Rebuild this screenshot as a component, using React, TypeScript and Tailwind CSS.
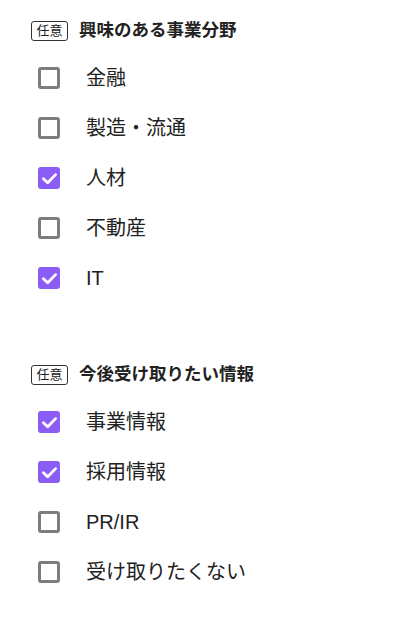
import React from "react";

const Check = ({ checked }: { checked: boolean }) =>
  checked ? (
    <span className="flex h-[22px] w-[22px] items-center justify-center rounded-[3px] bg-[#8b5cf6]">
      <svg width="17" height="17" viewBox="0 0 14 14" fill="none">
        <path d="M2 7.2 L5.5 10.5 L12 3.8" stroke="white" strokeWidth="2.3" strokeLinecap="round" strokeLinejoin="round" />
      </svg>
    </span>
  ) : (
    <span className="block h-[22px] w-[22px] rounded-[3px] border-[3px] border-[#7d7d7d] bg-white" />
  );

const Section = ({ title, items }: { title: string; items: [string, boolean][] }) => (
  <div className="flex flex-col">
    <div className="flex h-[21px] items-center gap-[11px]">
      <span className="flex h-[20px] w-[37px] items-center justify-center rounded-[3px] border border-[#333] text-[13px] leading-none text-[#222]">
        任意
      </span>
      <span className="text-[17.5px] font-bold text-[#222]">{title}</span>
    </div>
    <div className="mt-[12px] flex flex-col">
      {items.map(([label, c]) => (
        <div key={label} className="flex h-[50px] items-center">
          <span className="ml-[7px]">
            <Check checked={c} />
          </span>
          <span className="ml-[26px] text-[20px] text-[#222]">{label}</span>
        </div>
      ))}
    </div>
  </div>
);

export default function App() {
  return (
    <div
      className="h-[627px] w-[408px] bg-white pl-[31px] pt-[20px]"
      style={{ fontFamily: '"Liberation Sans", "Noto Sans CJK JP", sans-serif' }}
    >
      <Section
        title="興味のある事業分野"
        items={[
          ["金融", false],
          ["製造・流通", false],
          ["人材", true],
          ["不動産", false],
          ["IT", true],
        ]}
      />
      <div className="mt-[61px]">
        <Section
          title="今後受け取りたい情報"
          items={[
            ["事業情報", true],
            ["採用情報", true],
            ["PR/IR", false],
            ["受け取りたくない", false],
          ]}
        />
      </div>
    </div>
  );
}
